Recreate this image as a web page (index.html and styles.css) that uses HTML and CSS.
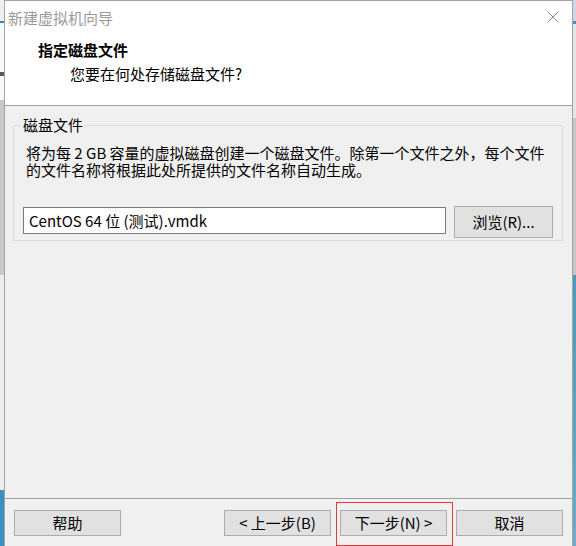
FILE: index.html
```html
<!DOCTYPE html>
<html lang="zh-CN">
<head>
<meta charset="utf-8">
<title>新建虚拟机向导</title>
<link rel="stylesheet" href="styles.css">
</head>
<body>
<div class="screen">
  <div class="strip strip-left">
    <div class="seg l1"></div>
    <div class="seg l2"></div>
    <div class="seg l3"></div>
    <div class="seg l4"></div>
    <div class="seg l5"></div>
    <div class="seg l6"></div>
    <div class="seg l7"></div>
    <div class="seg l8"></div>
  </div>

  <div class="window">
    <div class="titlebar">
      <span class="title">新建虚拟机向导</span>
      <svg class="close" width="12" height="12" viewBox="0 0 12 12" aria-hidden="true">
        <path d="M0.5 0.5 L11.5 11.5 M11.5 0.5 L0.5 11.5" stroke="#8a8a8a" stroke-width="1" fill="none"/>
      </svg>
    </div>

    <div class="header">
      <div class="header-title">指定磁盘文件</div>
      <div class="header-sub">您要在何处存储磁盘文件?</div>
    </div>

    <div class="content">
      <fieldset class="group">
        <legend class="group-label">磁盘文件</legend>
        <p class="desc">将为每 2 GB 容量的虚拟磁盘创建一个磁盘文件。除第一个文件之外，每个文件的文件名称将根据此处所提供的文件名称自动生成。</p>
        <div class="file-row">
          <input class="file-input" type="text" value="CentOS 64 位 (测试).vmdk">
          <button class="btn btn-browse" type="button">浏览(R)...</button>
        </div>
      </fieldset>
    </div>

    <div class="footer">
      <button class="btn btn-foot btn-help" type="button">帮助</button>
      <button class="btn btn-foot" type="button">&lt; 上一步(B)</button>
      <span class="mark"><button class="btn btn-foot" type="button">下一步(N) &gt;</button></span>
      <button class="btn btn-foot" type="button">取消</button>
    </div>
  </div>

  <div class="strip strip-right">
    <div class="seg r1"></div>
    <div class="seg r2"></div>
    <div class="seg r3"></div>
    <div class="seg r4"></div>
    <div class="seg r5"></div>
  </div>
</div>
</body>
</html>
```

FILE: styles.css
```css
* {
  box-sizing: border-box;
}

html, body {
  margin: 0;
  padding: 0;
  background: #f0f0f0;
}

body {
  font-family: "Noto Sans CJK SC", "Noto Sans", sans-serif;
  font-size: 15px;
  color: #000;
}

.screen {
  display: flex;
  width: 576px;
  height: 546px;
  overflow: hidden;
}

/* desktop slivers around the dialog */
.strip {
  display: flex;
  flex-direction: column;
  flex: none;
}
.strip-left { width: 4px; }
.strip-right { width: 3px; }

.l1 { height: 21px; background: #eef0f3; }
.l2 { height: 2px; background: #3b7fc4; }
.l3 { height: 49px; background: #f8f8f8; }
.l4 { height: 4px; background: #5a5a5a; }
.l5 { height: 24px; background: #f8f8f8; }
.l6 { height: 175px; background: #c9c9c9; }
.l7 { height: 215px; background: #eeeeee; }
.l8 { flex: 1; background: #3d8fbf; }

.r1 { height: 21px; background: #cfd7e3; }
.r2 { height: 3px; background: #4a8ec0; }
.r3 { height: 94px; background: #e6e6e6; }
.r4 { height: 157px; background: #c5c5c5; }
.r5 { flex: 1; background: linear-gradient(#4e9ab8, #6aaec6); }

/* dialog window */
.window {
  width: 569px;
  flex: none;
  display: flex;
  flex-direction: column;
  border: 1px solid #a3a3a3;
  border-bottom: none;
  background: #f0f0f0;
}

.titlebar {
  height: 31px;
  flex: none;
  display: flex;
  justify-content: space-between;
  align-items: flex-start;
  padding: 9px 13px 0 3px;
  background: #fff;
}

.title {
  line-height: 16px;
  color: #9a9a9a;
}

.close {
  display: block;
  margin-top: 1px;
}

.header {
  height: 74px;
  flex: none;
  background: #fff;
  border-bottom: 1px solid #a0a0a0;
  padding: 10px 0 0 33px;
}

.header-title {
  font-weight: bold;
  line-height: 16px;
}

.header-sub {
  margin: 8px 0 0 32px;
  line-height: 16px;
}

.content {
  flex: 1;
  min-height: 0;
}

.group {
  margin: 11px 9px 0 8px;
  padding: 0 9px 2px 9px;
  border: 1px solid #dcdcdc;
  min-inline-size: 0;
}

.group-label {
  padding: 0 2px;
  margin-left: -2px;
  line-height: 16px;
}

.desc {
  margin: 11px 0 0 3px;
  line-height: 17px;
}

.file-row {
  display: flex;
  align-items: flex-start;
  gap: 8px;
  margin-top: 28px;
}

.file-input {
  flex: 1;
  min-width: 0;
  height: 27px;
  margin: 1px 0 0 0;
  padding: 0 5px;
  border: 1px solid #7a7a7a;
  border-radius: 0;
  background: #fff;
  font: inherit;
  color: #000;
  outline: none;
}

.btn {
  font: inherit;
  color: #000;
  background: #e1e1e1;
  border: 1px solid #adadad;
  border-radius: 0;
  padding: 0;
  margin: 0;
  line-height: 16px;
}

.btn-browse {
  width: 99px;
  height: 32px;
  flex: none;
}

.footer {
  height: 48px;
  flex: none;
  display: flex;
  align-items: flex-start;
  gap: 9px;
  border-top: 1px solid #a0a0a0;
  padding: 11px 9px 0 9px;
}

.btn-foot {
  display: block;
  width: 107px;
  height: 26px;
}

.btn-help {
  margin-right: auto;
}

.mark {
  position: relative;
  display: block;
}

.mark::after {
  content: "";
  position: absolute;
  top: -8px;
  left: -4px;
  right: -6px;
  bottom: -10px;
  border: 1px solid #e53935;
  pointer-events: none;
}
```
